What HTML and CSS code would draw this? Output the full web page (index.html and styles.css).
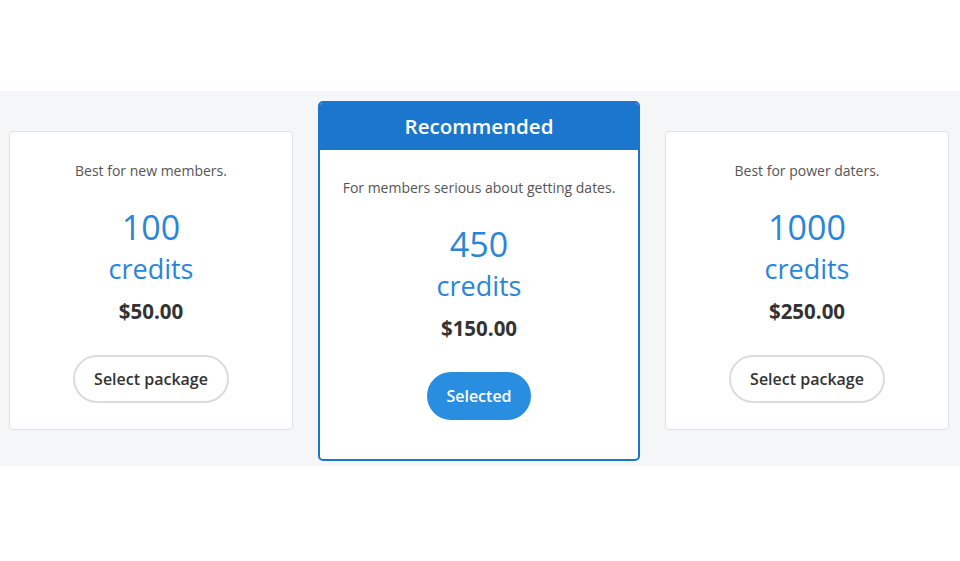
FILE: index.html
```html
<!DOCTYPE html>
<html>
<head>
<meta charset="utf-8">
<link rel="stylesheet" href="styles.css">
</head>
<body>
<div class="page">
  <section class="band">
    <div class="card">
      <div class="body">
        <p class="desc">Best for new members.</p>
        <div class="amount">100</div>
        <div class="unit">credits</div>
        <div class="price">$50.00</div>
        <button class="btn">Select package</button>
      </div>
    </div>
    <div class="card featured">
      <div class="head">Recommended</div>
      <div class="body">
        <p class="desc">For members serious about getting dates.</p>
        <div class="amount">450</div>
        <div class="unit">credits</div>
        <div class="price">$150.00</div>
        <button class="btn selected">Selected</button>
      </div>
    </div>
    <div class="card">
      <div class="body">
        <p class="desc">Best for power daters.</p>
        <div class="amount">1000</div>
        <div class="unit">credits</div>
        <div class="price">$250.00</div>
        <button class="btn">Select package</button>
      </div>
    </div>
  </section>
</div>
</body>
</html>
```
FILE: styles.css
```css
* { box-sizing: border-box; }
html, body { margin: 0; padding: 0; background: #fff; }
body { font-family: "Open Sans", "Noto Sans", sans-serif; color: #333; }
.page { width: 960px; height: 561px; padding-top: 91px; }
.band {
  background: #f5f6f8;
  height: 375px;
  display: flex;
  align-items: center;
  justify-content: space-between;
  padding: 4px 11px 0 9px;
}
.card {
  width: 284px;
  height: 299px;
  background: #fff;
  border: 1px solid #dfe1e5;
  border-radius: 4px;
}
.card.featured {
  width: 322px;
  height: 360px;
  border: 2px solid #1a77cd;
  border-radius: 5px;
  overflow: hidden;
}
.head {
  background: #1a77cd;
  color: #fff;
  height: 47px;
  display: flex;
  align-items: center;
  justify-content: center;
  font-size: 20.5px;
  font-weight: 600;
}
.body {
  display: flex;
  flex-direction: column;
  align-items: center;
  text-align: center;
  padding-top: 29px;
}
.featured .body { padding-top: 28px; }
.desc { margin: 0; font-size: 14px; color: #555; line-height: 20px; }
.amount { font-size: 34px; color: #2a86d6; line-height: 40px; margin-top: 26px; }
.unit { font-size: 27px; color: #2a86d6; line-height: 44px; }
.price { font-size: 20.5px; font-weight: 700; color: #333; line-height: 28px; margin-top: 6px; }
.btn {
  margin-top: 30px;
  height: 48px;
  padding: 0 19px;
  border: 2px solid #dcdcdc;
  border-radius: 24px;
  background: #fff;
  font-family: inherit;
  font-size: 16px;
  font-weight: 600;
  color: #333;
}
.btn.selected {
  background: #2a8ee0;
  border-color: #2a8ee0;
  color: #fff;
  padding: 0 17px;
}
```
